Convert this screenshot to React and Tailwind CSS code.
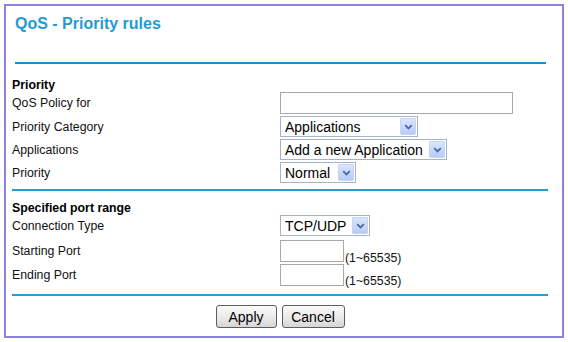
function Chevron() {
  return (
    <svg width="9" height="6" viewBox="0 0 9 6" className="block">
      <path d="M1.2 1.2 L4.5 4.4 L7.8 1.2" fill="none" stroke="#4a6aa5" strokeWidth="1.8" />
    </svg>
  );
}

function FakeSelect({ value, width }) {
  return (
    <div
      className="h-[21px] flex items-stretch bg-white border border-[#a4b3c9] p-[1px]"
      style={{ width }}
    >
      <div className="flex-1 flex items-center pl-[3px] text-[14px] text-black leading-none whitespace-nowrap">
        {value}
      </div>
      <div className="w-[16px] flex items-center justify-center rounded-[1px] bg-gradient-to-b from-[#dbe6fd] to-[#b7cbf6] border border-[#c7d5f5]">
        <Chevron />
      </div>
    </div>
  );
}

function Row({ label, h, mb, children }) {
  return (
    <div className={`flex items-center ${h} ${mb}`}>
      <div className="w-[268px] text-[12.3px] text-[#111] leading-[14px]">{label}</div>
      {children}
    </div>
  );
}

export default function App() {
  return (
    <div className="w-[568px] h-[342px] bg-white pt-[4px] pl-[4px] font-['Liberation_Sans',Arial,sans-serif] overflow-hidden">
      <div className="w-[560px] h-[334px] border-2 border-[#8c84dc] bg-white">
        {/* Title */}
        <div className="pt-[9px] pl-[9px] h-[27px]">
          <h1 className="text-[16px] leading-[18px] font-bold text-[#1f9bd3]">QoS - Priority rules</h1>
        </div>

        <div className="pl-[6px] w-[542px]">
          <div className="mt-[29px] ml-[3px] w-[531px] h-[2px] bg-[#1a8bcc]"></div>

          {/* Priority */}
          <div className="mt-[14px] text-[12.3px] leading-[14px] font-bold text-black">Priority</div>

          <Row label="QoS Policy for" h="h-[22px]" mb="mb-[2px]">
            <div className="w-[233px] h-[22px] border border-[#a8a8a8] bg-white"></div>
          </Row>
          <Row label="Priority Category" h="h-[21px]" mb="mb-[2px]">
            <FakeSelect value="Applications" width={138} />
          </Row>
          <Row label="Applications" h="h-[21px]" mb="mb-[2px]">
            <FakeSelect value="Add a new Application" width={167} />
          </Row>
          <Row label="Priority" h="h-[21px]" mb="mb-0">
            <FakeSelect value="Normal" width={76} />
          </Row>

          <div className="mt-[6px] w-[536px] h-[2px] bg-[#2a9bd3]"></div>

          {/* Specified port range */}
          <div className="mt-[10px] text-[12.3px] leading-[14px] font-bold text-black">Specified port range</div>

          <Row label="Connection Type" h="h-[21px]" mb="mb-[4px]">
            <FakeSelect value="TCP/UDP" width={90} />
          </Row>
          <div className="flex items-end h-[22px] mb-[2px]">
            <div className="w-[268px] self-center text-[12.3px] text-[#111] leading-[14px]">Starting Port</div>
            <div className="w-[64px] h-[22px] border border-[#a8a8a8] bg-white"></div>
            <span className="ml-[1px] mb-[-3px] text-[12.3px] leading-[14px] text-[#111]">(1~65535)</span>
          </div>
          <div className="flex items-end h-[22px]">
            <div className="w-[268px] self-center text-[12.3px] text-[#111] leading-[14px]">Ending Port</div>
            <div className="w-[64px] h-[22px] border border-[#a8a8a8] bg-white"></div>
            <span className="ml-[1px] mb-[-2px] text-[12.3px] leading-[14px] text-[#111]">(1~65535)</span>
          </div>

          <div className="mt-[8px] w-[536px] h-[2px] bg-[#2a9bd3]"></div>

          {/* Buttons */}
          <div className="mt-[9px] w-[536px] flex justify-center gap-[5px]">
            <button className="w-[61px] h-[23px] rounded-[3px] border border-[#5e5e5e] bg-gradient-to-b from-[#fbfbfb] via-[#ececec] to-[#d6d6d6] text-[14px] text-black leading-none">
              Apply
            </button>
            <button className="w-[63px] h-[23px] rounded-[3px] border border-[#5e5e5e] bg-gradient-to-b from-[#fbfbfb] via-[#ececec] to-[#d6d6d6] text-[14px] text-black leading-none">
              Cancel
            </button>
          </div>
        </div>
      </div>
    </div>
  );
}
